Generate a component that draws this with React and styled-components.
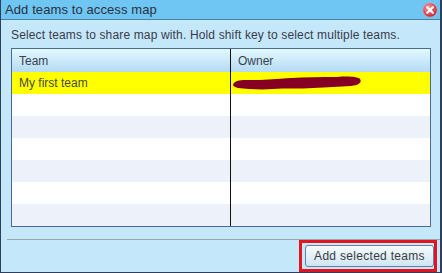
import React from 'react'
import styled, { createGlobalStyle } from 'styled-components'

const Global = createGlobalStyle`
  html, body {
    margin: 0;
    padding: 0;
    background: #c4e8fa;
  }
  * { box-sizing: border-box; }
`

const Dialog = styled.div`
  width: 442px;
  height: 273px;
  background: #c4e8fa;
  border-left: 1px solid #2e3f5c;
  border-right: 2px solid #2e3f5c;
  border-bottom: 1px solid #2e3f5c;
  font-family: 'Liberation Sans', Arial, sans-serif;
  color: #333344;
  display: flex;
  flex-direction: column;
`

const TitleBar = styled.div`
  height: 20px;
  background: #6fc6f3;
  border-bottom: 1px solid #4d7fa6;
  display: flex;
  align-items: center;
  justify-content: space-between;
  padding: 0 2px 0 4px;
`

const Title = styled.div`
  font-size: 13px;
  color: #2a3040;
  letter-spacing: 0.1px;
`

const Body = styled.div`
  flex: 1;
  padding: 0 9px 0 10px;
  display: flex;
  flex-direction: column;
`

const Instruction = styled.div`
  font-size: 12px;
  height: 28px;
  line-height: 14px;
  padding-top: 8px;
  letter-spacing: 0.15px;
  color: #3a3a4c;
`

const Table = styled.div`
  width: 420px;
  border: 1px solid #4a6a96;
  background: #fff;
`

const Row = styled.div`
  display: grid;
  grid-template-columns: 218px 1fr;
  height: ${p => (p.$header ? 23 : 22)}px;
  background: ${p =>
    p.$header
      ? 'linear-gradient(#e2f9ff, #b4daf3)'
      : p.$selected
      ? '#ffff00'
      : p.$alt
      ? '#edf2fa'
      : '#ffffff'};
`

const Cell = styled.div`
  display: flex;
  align-items: center;
  font-size: 12px;
  color: ${p => (p.$header ? '#3a4050' : '#4a4a30')};
  padding-left: ${p => (p.$owner ? (p.$header ? 7 : 2) : 7)}px;
  border-left: ${p => (p.$owner ? '1px solid #111' : 'none')};
`

const Footer = styled.div`
  margin: 12px -9px 0 -4px;
  border-top: 1px solid #9aa6ae;
  display: flex;
  justify-content: flex-end;
  padding-right: 3px;
`

const Highlight = styled.div`
  border: 3px solid #e4141e;
  padding: 2px 0 2px 3px;
`

const Button = styled.button`
  width: 129px;
  height: 22px;
  border: 1px solid #6a7f9e;
  border-radius: 3px;
  background: linear-gradient(#f6fbff, #cfe5f4);
  font-family: 'Liberation Sans', Arial, sans-serif;
  font-size: 12px;
  letter-spacing: 0.3px;
  color: #3a3a3a;
  padding: 0;
  display: block;
`

function CloseIcon() {
  return (
    <svg width="16" height="16" viewBox="0 0 16 16">
      <defs>
        <radialGradient id="cg" cx="40%" cy="35%" r="70%">
          <stop offset="0" stopColor="#f4a0a8" />
          <stop offset="0.6" stopColor="#e04a58" />
          <stop offset="1" stopColor="#b8202e" />
        </radialGradient>
      </defs>
      <circle cx="8" cy="8" r="7.3" fill="url(#cg)" stroke="#a8b8c8" strokeWidth="0.9" />
      <path d="M5.2 5.2 L10.8 10.8 M10.8 5.2 L5.2 10.8" stroke="#fff" strokeWidth="2.2" strokeLinecap="round" />
    </svg>
  )
}

function Scribble() {
  return (
    <svg width="130" height="14" viewBox="0 0 130 14">
      <path
        d="M1 7 C4 3 14 4 26 4 C40 3 48 3 58 2 C72 1 88 1 104 1 C116 0 125 1 127 3 C129 6 127 9 118 10 C106 11 94 11 80 12 C66 13 52 12 40 13 C28 14 14 13 5 12 C0 11 -1 9 1 7 Z"
        fill="#850022"
      />
    </svg>
  )
}

const rows = [0, 1, 2, 3, 4, 5]

export default function App() {
  return (
    <>
      <Global />
      <Dialog>
        <TitleBar>
          <Title>Add teams to access map</Title>
          <CloseIcon />
        </TitleBar>
        <Body>
          <Instruction>Select teams to share map with. Hold shift key to select multiple teams.</Instruction>
          <Table>
            <Row $header>
              <Cell $header>Team</Cell>
              <Cell $header $owner>Owner</Cell>
            </Row>
            <Row $selected>
              <Cell>My first team</Cell>
              <Cell $owner><Scribble /></Cell>
            </Row>
            {rows.map(i => (
              <Row key={i} $alt={i % 2 === 1}>
                <Cell />
                <Cell $owner />
              </Row>
            ))}
          </Table>
          <Footer>
            <Highlight>
              <Button>Add selected teams</Button>
            </Highlight>
          </Footer>
        </Body>
      </Dialog>
    </>
  )
}
